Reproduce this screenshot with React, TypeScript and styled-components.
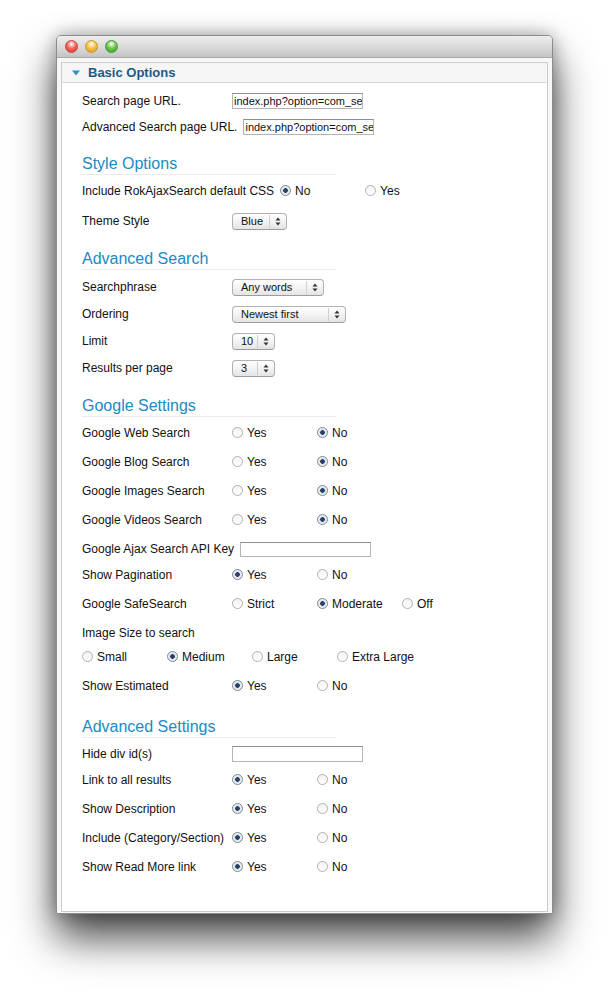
import React from "react";
import styled, { createGlobalStyle } from "styled-components";

const Global = createGlobalStyle`
  html, body { margin: 0; padding: 0; background: #ffffff; }
  body { font-family: "Liberation Sans", Arial, sans-serif; color: #111; }
`;

const Page = styled.div`
  padding: 35px 0 0 56px;
  height: 958px;
`;

const Window = styled.div`
  width: 497px;
  height: 879px;
  box-sizing: border-box;
  border: 1px solid #8c8c8c;
  border-radius: 5px 5px 1px 1px;
  background: #f7f7f7;
  display: flex;
  flex-direction: column;
  box-shadow: 0 24px 42px rgba(0, 0, 0, 0.72), 0 0 18px rgba(0, 0, 0, 0.32);
`;

const TitleBar = styled.div`
  height: 21px;
  flex-shrink: 0;
  border-radius: 4px 4px 0 0;
  background: linear-gradient(#eeeeee, #d9d9d9 55%, #c4c4c4);
  border-bottom: 1px solid #a9a9a9;
  display: flex;
  align-items: center;
  gap: 7px;
  padding-left: 8px;
`;

const Light = styled.span<{ $c: string; $ring: string }>`
  width: 13px;
  height: 13px;
  box-sizing: border-box;
  border-radius: 50%;
  border: 1px solid ${(p) => p.$ring};
  background: radial-gradient(circle at 50% 28%, #ffffff 0, ${(p) => p.$c} 48%, ${(p) => p.$ring} 100%);
`;

const Body = styled.div`
  flex: 1;
  padding: 4px 4px 1px 4px;
  display: flex;
`;

const Panel = styled.div`
  flex: 1;
  border: 1px solid #cdcdcd;
  background: #ffffff;
  display: flex;
  flex-direction: column;
`;

const PanelHeader = styled.div`
  height: 19px;
  background: #f5f5f5;
  border-bottom: 1px solid #d6d6d6;
  display: flex;
  align-items: center;
  padding-left: 10px;
  gap: 8px;
  font-weight: bold;
  font-size: 13px;
  color: #1d5a8a;
`;

const Content = styled.div`
  padding: 8px 0 0 20px;
`;

const Heading = styled.div<{ $gap: number }>`
  width: 254px;
  margin-top: ${(p) => p.$gap}px;
  font-size: 16px;
  line-height: 20px;
  color: #2189c4;
  border-bottom: 1px solid #ececec;
`;

const Row = styled.div<{ $gap: number }>`
  height: 20px;
  margin-top: ${(p) => p.$gap}px;
  display: flex;
  align-items: center;
  font-size: 12px;
  white-space: nowrap;
`;

const Label = styled.span`
  min-width: 150px;
  box-sizing: border-box;
  padding-right: 6px;
  flex-shrink: 0;
`;

const TextInput = styled.div<{ $h?: number }>`
  width: 131px;
  height: ${(p) => p.$h ?? 16}px;
  box-sizing: border-box;
  border: 1px solid #b4b4b4;
  border-top-color: #8e8e8e;
  background: #fff;
  font-size: 11px;
  line-height: 14px;
  padding-left: 1px;
  overflow: hidden;
  white-space: nowrap;
`;

const SelectBox = styled.div<{ $w: number }>`
  width: ${(p) => p.$w}px;
  height: 17px;
  box-sizing: border-box;
  border: 1px solid #b1b1b1;
  border-bottom-color: #9c9c9c;
  border-radius: 4px;
  background: linear-gradient(#ffffff, #f3f3f3 50%, #e4e4e4);
  display: flex;
  align-items: center;
  font-size: 11px;
`;

const SelectValue = styled.span`
  flex: 1;
  padding-left: 8px;
`;

const SelectArrow = styled.span`
  width: 16px;
  height: 13px;
  border-left: 1px solid #cfcfcf;
  display: flex;
  align-items: center;
  justify-content: center;
`;

const Option = styled.span`
  width: 85px;
  flex-shrink: 0;
  display: inline-flex;
  align-items: center;
  gap: 4px;
`;

const RadioDot = styled.span<{ $on: boolean }>`
  width: 11px;
  height: 11px;
  box-sizing: border-box;
  border-radius: 50%;
  border: 1px solid ${(p) => (p.$on ? "#7b8798" : "#b0b0b0")};
  background: ${(p) =>
    p.$on
      ? "radial-gradient(circle, #2b3f63 0, #2b3f63 2px, #dfe5ee 2.6px, #f7f9fb 100%)"
      : "linear-gradient(#f2f2f2, #ffffff)"};
  margin-bottom: 2px;
`;

const Arrows = () => (
  <svg width="6" height="9" viewBox="0 0 6 9">
    <path d="M3 0.5 L5.5 3.5 L0.5 3.5 Z M3 8.5 L5.5 5.5 L0.5 5.5 Z" fill="#333" />
  </svg>
);

const Triangle = () => (
  <svg width="8" height="6" viewBox="0 0 8 6">
    <path d="M0 0.5 L8 0.5 L4 5.5 Z" fill="#2b91c9" />
  </svg>
);

const Select = ({ w, value }: { w: number; value: string }) => (
  <SelectBox $w={w}>
    <SelectValue>{value}</SelectValue>
    <SelectArrow>
      <Arrows />
    </SelectArrow>
  </SelectBox>
);

const Radios = ({ options, selected }: { options: string[]; selected: number }) => (
  <>
    {options.map((o, i) => (
      <Option key={o}>
        <RadioDot $on={i === selected} />
        {o}
      </Option>
    ))}
  </>
);

type Item =
  | { kind: "heading"; text: string; gap: number }
  | { kind: "input"; label: string; value?: string; gap: number; h?: number }
  | { kind: "select"; label: string; value: string; w: number; gap: number }
  | { kind: "radio"; label?: string; options: string[]; selected: number; gap: number }
  | { kind: "text"; label: string; gap: number };

const YN = ["Yes", "No"];

const items: Item[] = [
  { kind: "input", label: "Search page URL.", value: "index.php?option=com_se", gap: 0 },
  { kind: "input", label: "Advanced Search page URL.", value: "index.php?option=com_se", gap: 6 },
  { kind: "heading", text: "Style Options", gap: 17 },
  { kind: "radio", label: "Include RokAjaxSearch default CSS", options: ["No", "Yes"], selected: 0, gap: 6 },
  { kind: "select", label: "Theme Style", value: "Blue", w: 55, gap: 10 },
  { kind: "heading", text: "Advanced Search", gap: 18 },
  { kind: "select", label: "Searchphrase", value: "Any words", w: 92, gap: 7 },
  { kind: "select", label: "Ordering", value: "Newest first", w: 114, gap: 7 },
  { kind: "select", label: "Limit", value: "10", w: 43, gap: 7 },
  { kind: "select", label: "Results per page", value: "3", w: 43, gap: 7 },
  { kind: "heading", text: "Google Settings", gap: 18 },
  { kind: "radio", label: "Google Web Search", options: YN, selected: 1, gap: 6 },
  { kind: "radio", label: "Google Blog Search", options: YN, selected: 1, gap: 9 },
  { kind: "radio", label: "Google Images Search", options: YN, selected: 1, gap: 9 },
  { kind: "radio", label: "Google Videos Search", options: YN, selected: 1, gap: 9 },
  { kind: "input", label: "Google Ajax Search API Key", gap: 9, h: 15 },
  { kind: "radio", label: "Show Pagination", options: YN, selected: 0, gap: 6 },
  { kind: "radio", label: "Google SafeSearch", options: ["Strict", "Moderate", "Off"], selected: 1, gap: 9 },
  { kind: "text", label: "Image Size to search", gap: 9 },
  { kind: "radio", options: ["Small", "Medium", "Large", "Extra Large"], selected: 1, gap: 4 },
  { kind: "radio", label: "Show Estimated", options: YN, selected: 0, gap: 9 },
  { kind: "heading", text: "Advanced Settings", gap: 21 },
  { kind: "input", label: "Hide div id(s)", gap: 6 },
  { kind: "radio", label: "Link to all results", options: YN, selected: 0, gap: 6 },
  { kind: "radio", label: "Show Description", options: YN, selected: 0, gap: 9 },
  { kind: "radio", label: "Include (Category/Section)", options: YN, selected: 0, gap: 9 },
  { kind: "radio", label: "Show Read More link", options: YN, selected: 0, gap: 9 },
];

const renderItem = (it: Item, i: number) => {
  switch (it.kind) {
    case "heading":
      return (
        <Heading key={i} $gap={it.gap}>
          {it.text}
        </Heading>
      );
    case "input":
      return (
        <Row key={i} $gap={it.gap}>
          <Label>{it.label}</Label>
          <TextInput $h={it.h}>{it.value ?? ""}</TextInput>
        </Row>
      );
    case "select":
      return (
        <Row key={i} $gap={it.gap}>
          <Label>{it.label}</Label>
          <Select w={it.w} value={it.value} />
        </Row>
      );
    case "radio":
      return (
        <Row key={i} $gap={it.gap}>
          {it.label && <Label>{it.label}</Label>}
          <Radios options={it.options} selected={it.selected} />
        </Row>
      );
    case "text":
      return (
        <Row key={i} $gap={it.gap}>
          <Label>{it.label}</Label>
        </Row>
      );
  }
};

export default function App() {
  return (
    <Page>
      <Global />
      <Window>
        <TitleBar>
          <Light $c="#fb5d57" $ring="#c9403a" />
          <Light $c="#f9be3f" $ring="#cf9524" />
          <Light $c="#6cc24a" $ring="#3f9a2c" />
        </TitleBar>
        <Body>
          <Panel>
            <PanelHeader>
              <Triangle />
              Basic Options
            </PanelHeader>
            <Content>{items.map(renderItem)}</Content>
          </Panel>
        </Body>
      </Window>
    </Page>
  );
}
